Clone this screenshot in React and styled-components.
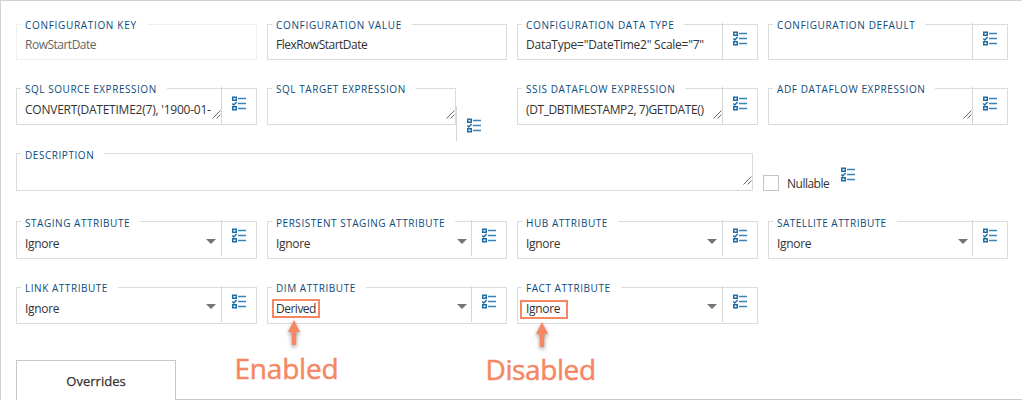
import React from "react";
import styled, { createGlobalStyle } from "styled-components";

const GlobalStyle = createGlobalStyle`
  * { box-sizing: border-box; }
  body {
    margin: 0;
    overflow: hidden;
    background: #fff;
    color: #333;
    font-family: "Open Sans", "Noto Sans", sans-serif;
    font-size: 12px;
  }
`;

const Page = styled.main`
  position: relative;
  display: flex;
  flex-direction: column;
  width: 1022px;
  height: 400px;
  padding: 23px 0 0 15px;
  border: 1px solid #d2d2d2;
  border-width: 1px 0 0 1px;
`;

const Row = styled.div`
  display: grid;
  grid-template-columns: 241px 240px 241px 240px;
  grid-template-rows: 100%;
  column-gap: 10px;
  height: ${(p) => p.$height}px;
  margin-bottom: ${(p) => p.$after}px;
`;

const DescriptionRow = styled.div`
  display: flex;
  align-items: flex-start;
  height: 38px;
  margin-bottom: 30px;
`;

const Frame = styled.div`
  display: flex;
  min-width: 0;
  width: ${(p) => p.$width || "auto"};
  height: 100%;
  border: 1px solid ${(p) => (p.$muted ? "#efefef" : "#dcdcdc")};
`;

const Content = styled.div`
  position: relative;
  display: flex;
  flex: 1;
  flex-direction: column;
  align-items: flex-start;
  min-width: 0;
  padding-left: 4px;
`;

const Label = styled.span`
  flex: none;
  height: 14px;
  margin-top: ${(p) => -4 - p.$lift}px;
  padding: 0 10px 0 4px;
  background: #fff;
  color: #0c4a7a;
  font-size: 10px;
  line-height: 14px;
  letter-spacing: ${(p) => p.$track}px;
  white-space: nowrap;
`;

const Value = styled.span`
  flex: none;
  margin-top: ${(p) => p.$top}px;
  padding-left: 4px;
  color: ${(p) => (p.$muted ? "#666" : "#333")};
  line-height: 16px;
  letter-spacing: ${(p) => p.$track}px;
  white-space: pre;
`;

const Caret = styled.i`
  position: absolute;
  right: 5px;
  bottom: ${(p) => p.$bottom}px;
  border: solid transparent;
  border-width: 5px 5px 0;
  border-top-color: #757575;

  ${Frame}:nth-child(even) & {
    right: 4px;
  }
`;

const Grip = styled.svg`
  position: absolute;
  right: 0;
  bottom: 5px;
  width: 9px;
  height: 9px;
`;

const Action = styled.div`
  flex: none;
  width: 35px;
  height: ${(p) => p.$height || "calc(100% + 2px)"};
  margin-top: -2px;
  padding: ${(p) => p.$pad}px 0 0 10px;
  border-left: 1px solid #d6d6d6;
`;

const DetachedField = styled.div`
  display: flex;
  height: 100%;
`;

const DetachedAction = styled(Action)`
  height: 35px;
  margin-top: 18px;
`;

const ListSvg = styled.svg`
  display: block;
  flex: none;
  width: 14px;
  height: 15px;
`;

const CheckBox = styled.span`
  width: 16px;
  height: 16px;
  margin: 22px 8px 0 10px;
  border: 1px solid #c4c4c4;
`;

const CheckText = styled.span`
  width: 54px;
  margin-top: 22px;
  line-height: 17px;
  letter-spacing: -0.5px;
`;

const NullableIcon = styled.div`
  margin-top: 14px;
`;

const TabBar = styled.div`
  display: flex;
  height: 40px;
`;

const Tab = styled.div`
  width: 160px;
  border: 1px solid #c8c8c8;
  border-bottom: 0;
  color: #333;
  font-size: 13px;
  -webkit-text-stroke: 0.25px #333;
  line-height: 40px;
  text-align: center;
`;

const TabRule = styled.div`
  flex: 1;
  border-bottom: 1px solid #c8c8c8;
`;

const Callout = styled.div`
  position: absolute;
  left: ${(p) => p.$x}px;
  top: ${(p) => p.$y}px;
  width: 48px;
  height: 19px;
  border: 2px solid #f58762;
`;

const Arrow = styled.svg`
  position: absolute;
  left: ${(p) => p.$x}px;
  top: ${(p) => p.$y}px;
  width: 20px;
  height: 34px;
  overflow: visible;
  filter: drop-shadow(0 2px 2px rgba(0, 0, 0, 0.4));
`;

const Note = styled.span`
  position: absolute;
  left: ${(p) => p.$x}px;
  top: ${(p) => p.$y}px;
  color: #f58762;
  font-size: 28px;
  -webkit-text-stroke: 0.5px #f58762;
  line-height: 32px;
  letter-spacing: ${(p) => p.$track}px;
`;

function ListIcon() {
  return (
    <ListSvg viewBox="0 0 14 15" fill="none" stroke="#1c6da8">
      <path d="M.75 1.25h3.5v3h-3.5zM.75 10.75h3.5v3h-3.5z" strokeWidth="1.5" />
      <path d="M.3 7.5 1.8 9 4.6 6" strokeWidth="1.4" />
      <path d="M6 2.5h8M6 7.5h8M6 12.5h8" stroke="#3983b8" strokeWidth="1.4" />
    </ListSvg>
  );
}

function ResizeGrip() {
  return (
    <Grip viewBox="0 0 9 9" stroke="#555" strokeWidth="0.9">
      <path d="M.5 8.5 8.5.5M4.5 8.5l4-4" />
    </Grip>
  );
}

function Body({ label, track = 0.55, lift = 3, value, valueTrack = -0.3, top = 5, muted, caretBottom, grip }) {
  return (
    <Content>
      <Label $track={track} $lift={lift}>{label}</Label>
      {value && <Value $track={valueTrack} $top={top} $muted={muted}>{value}</Value>}
      {caretBottom && <Caret $bottom={caretBottom} />}
      {grip && <ResizeGrip />}
    </Content>
  );
}

function Field({ action = true, pad = 8, actionHeight, muted, ...body }) {
  return (
    <Frame $muted={muted}>
      <Body muted={muted} {...body} />
      {action && (
        <Action $pad={pad} $height={actionHeight}>
          <ListIcon />
        </Action>
      )}
    </Frame>
  );
}

function SelectField(props) {
  return <Field caretBottom={14} value="Ignore" track={0.54} actionHeight="36px" top={6} {...props} />;
}

function Annotation({ box, arrow, note, track, children }) {
  return (
    <>
      <Callout $x={box[0]} $y={box[1]} />
      <Arrow $x={arrow[0]} $y={arrow[1]} viewBox="0 0 20 34">
        <path d="M10 0 16 12H12.200V25H7.800V12H4z" fill="#f58762" />
      </Arrow>
      <Note $x={note[0]} $y={note[1]} $track={track}>{children}</Note>
    </>
  );
}

export default function App() {
  return (
    <>
      <GlobalStyle />
      <Page>
        <Row $height={36} $after={28}>
          <Field label="CONFIGURATION KEY" track={0.68} value="RowStartDate" valueTrack={-0.5} muted action={false} />
          <Field label="CONFIGURATION VALUE" track={0.67} value="FlexRowStartDate" valueTrack={-0.5} action={false} />
          <Field label="CONFIGURATION DATA TYPE" track={0.65} value={'DataType="DateTime2" Scale="7"'} valueTrack={-0.25} />
          <Field label="CONFIGURATION DEFAULT" track={0.63} />
        </Row>
        <Row $height={37} $after={28}>
          <Field label="SQL SOURCE EXPRESSION" track={0.54} value="CONVERT(DATETIME2(7), '1900-01-" valueTrack={-0.23} top={6} pad={9} grip />
          <DetachedField>
            <Frame $width="189px">
              <Body label="SQL TARGET EXPRESSION" track={0.55} grip />
            </Frame>
            <DetachedAction $pad={12}>
              <ListIcon />
            </DetachedAction>
          </DetachedField>
          <Field label="SSIS DATAFLOW EXPRESSION" track={0.58} value="(DT_DBTIMESTAMP2, 7)GETDATE()" valueTrack={-0.39} top={6} pad={9} grip />
          <Field label="ADF DATAFLOW EXPRESSION" track={0.59} pad={9} grip />
        </Row>
        <DescriptionRow>
          <Frame $width="737px">
            <Body label="DESCRIPTION" track={0.55} lift={2} grip />
          </Frame>
          <CheckBox />
          <CheckText>Nullable</CheckText>
          <NullableIcon>
            <ListIcon />
          </NullableIcon>
        </DescriptionRow>
        <Row $height={38} $after={28}>
          <SelectField label="STAGING ATTRIBUTE" lift={2} />
          <SelectField label="PERSISTENT STAGING ATTRIBUTE" lift={2} />
          <SelectField label="HUB ATTRIBUTE" lift={2} />
          <SelectField label="SATELLITE ATTRIBUTE" track={0.46} lift={2} />
        </Row>
        <Row $height={37} $after={36}>
          <SelectField label="LINK ATTRIBUTE" />
          <SelectField label="DIM ATTRIBUTE" value="Derived" valueTrack={-0.5} />
          <SelectField label="FACT ATTRIBUTE" />
        </Row>
        <TabBar>
          <Tab>Overrides</Tab>
          <TabRule />
        </TabBar>
        <Annotation box={[271, 298]} arrow={[283, 319]} note={[233.5, 351]} track={-0.2}>Enabled</Annotation>
        <Annotation box={[519, 299]} arrow={[531, 321]} note={[484.5, 352]} track={-0.4}>Disabled</Annotation>
      </Page>
    </>
  );
}
